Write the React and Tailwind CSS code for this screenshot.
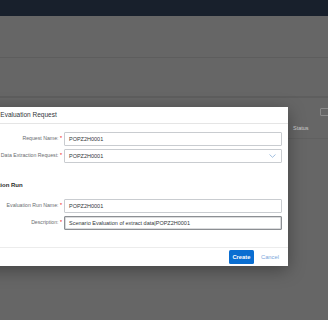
import React from 'react';

const Field = ({ label, value, select, focused }) => (
  <div className="flex items-center h-[14px]">
    <div className="w-[85px] shrink-0 text-right text-[5.2px] text-[#6a6d70] pr-[2px] whitespace-nowrap">
      {label}: <span className="text-[#e00]">*</span>
    </div>
    <div
      className={
        'flex-1 h-full flex items-center justify-between px-[4px] bg-white rounded-[1px] ' +
        (focused ? 'border border-[#8c8f93] shadow-[inset_0_0_0_0.5px_#b5b8bb]' : 'border border-[#c9ccd0]')
      }
    >
      <span className="text-[5.5px] text-[#32363a] whitespace-nowrap">{value}</span>
      {select && (
        <svg width="7" height="4" viewBox="0 0 7 4" className="mr-[1px]">
          <path d="M0.5 0.5 L3.5 3.3 L6.5 0.5" fill="none" stroke="#8ab0d8" strokeWidth="0.8" />
        </svg>
      )}
    </div>
  </div>
);

export default function App() {
  return (
    <div className="relative w-[328px] h-[320px] overflow-hidden bg-[#666666] font-['Liberation_Sans',Arial,sans-serif]">
      <div className="h-[16px] bg-[#18202c]" />
      <div className="h-[42px] border-b border-[#5d5d5d]" />
      <div className="h-[40px] border-b-2 border-[#5e5e5e]" />
      <div className="flex justify-end pt-[10px]">
        <div className="w-[10px] h-[8px] border border-[#8a8a8a] rounded-[1px] -mr-[2px]" />
      </div>
      <div className="flex pl-[293px] pt-[8px] pb-[6px] border-b border-[#606060]">
        <span className="text-[5.5px] text-[#cfcfcf]">Status</span>
      </div>

      <div className="absolute left-[-37px] top-[107px] w-[325px] bg-white shadow-[0_4px_16px_rgba(0,0,0,0.35)]">
        <div className="h-[17px] flex items-center pl-[16px] border-b border-[#e5e5e5]">
          <span className="text-[6.5px] text-[#32363a] whitespace-nowrap">Create Evaluation Request</span>
        </div>
        <div className="pl-[16px] pr-[6px] pt-[8px]">
          <div className="flex flex-col gap-[3px]">
            <Field label="Request Name" value="POPZ2H0001" />
            <Field label="Data Extraction Request" value="POPZ2H0001" select />
          </div>
          <div className="mt-[18px] h-[8px] flex items-center text-[6px] font-bold text-[#2a2a2a] whitespace-nowrap">
            Evaluation Run
          </div>
          <div className="mt-[10px] flex flex-col gap-[3px]">
            <Field label="Evaluation Run Name" value="POPZ2H0001" />
            <Field label="Description" value="Scenario Evaluation of extract data|POPZ2H0001" focused />
          </div>
        </div>
        <div className="mt-[17px] h-[19px] border-t border-[#ececec] flex items-center justify-end gap-[7px] pr-[9px]">
          <button className="w-[25px] h-[14px] bg-[#0a6ed1] rounded-[1.5px] text-white text-[5.8px] font-bold">
            Create
          </button>
          <button className="text-[5.8px] text-[#79a6db]">Cancel</button>
        </div>
      </div>
    </div>
  );
}
